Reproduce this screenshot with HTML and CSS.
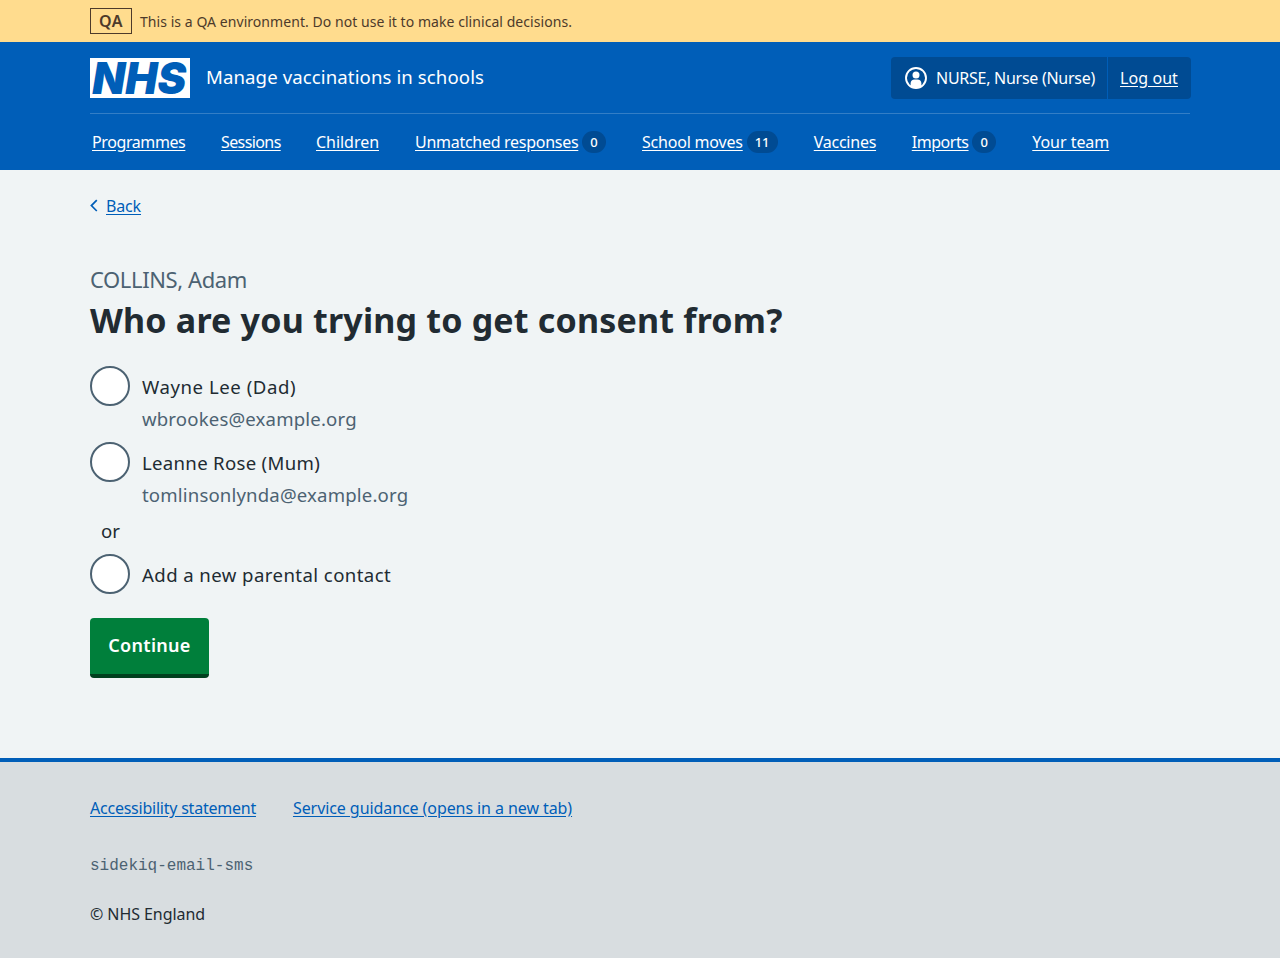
FILE: index.html
```
<!DOCTYPE html>
<html lang="en">
<head>
<meta charset="utf-8">
<title>Who are you trying to get consent from?</title>
<link rel="stylesheet" href="styles.css">
</head>
<body>
<div class="env">
  <div class="container env-row">
    <strong class="env-tag">QA</strong>
    <span class="env-text">This is a QA environment. Do not use it to make clinical decisions.</span>
  </div>
</div>
<header class="header">
  <div class="container">
    <div class="header-top">
      <svg class="logo" viewBox="0 0 100 40" role="img" aria-label="NHS">
        <rect width="100" height="40" fill="#fff"/>
        <text class="logo-text" x="2.2" y="36.2" textLength="94" lengthAdjust="spacingAndGlyphs">NHS</text>
      </svg>
      <span class="service">Manage vaccinations in schools</span>
      <div class="account">
        <span class="account-item account-user">
          <svg class="user-icon" viewBox="0 0 24 24" aria-hidden="true">
            <circle cx="12" cy="12" r="10" fill="none" stroke="#fff" stroke-width="1.9"/>
            <circle cx="12" cy="9" r="3.5" fill="#fff"/>
            <path d="M6.6 20.4v-3c0-2.6 1.7-4 4-4h2.8c2.3 0 4 1.4 4 4v3a10 10 0 0 1-10.8 0z" fill="#fff"/>
          </svg>
          <span class="user-name">NURSE, Nurse (Nurse)</span>
        </span>
        <span class="account-item account-out"><a class="logout" href="#">Log out</a></span>
      </div>
    </div>
    <nav class="nav">
      <a class="nav-item" href="#"><span class="link l-programmes">Programmes</span></a>
      <a class="nav-item" href="#"><span class="link l-sessions">Sessions</span></a>
      <a class="nav-item" href="#"><span class="link l-children">Children</span></a>
      <a class="nav-item" href="#"><span class="link l-responses">Unmatched responses</span><span class="count">0</span></a>
      <a class="nav-item" href="#"><span class="link l-moves">School moves</span><span class="count">11</span></a>
      <a class="nav-item" href="#"><span class="link l-vaccines">Vaccines</span></a>
      <a class="nav-item" href="#"><span class="link l-imports">Imports</span><span class="count">0</span></a>
      <a class="nav-item" href="#"><span class="link l-team">Your team</span></a>
    </nav>
  </div>
</header>
<div class="container page">
  <a class="back" href="#">
    <svg class="back-icon" viewBox="0 0 8 14" aria-hidden="true"><path d="M6.8 1.2 1.4 6.6l5.4 5.4" fill="none" stroke="#005eb8" stroke-width="1.7"/></svg>
    <span class="back-text">Back</span>
  </a>
  <main class="main">
    <h1 class="title"><span class="caption">COLLINS, Adam</span><span class="question">Who are you trying to get consent from?</span></h1>
    <div class="radios">
      <div class="radio"><span class="dot"></span><div class="label"><span class="name n-wayne">Wayne Lee (Dad)</span><span class="hint">wbrookes@example.org</span></div></div>
      <div class="radio"><span class="dot"></span><div class="label"><span class="name">Leanne Rose (Mum)</span><span class="hint">tomlinsonlynda@example.org</span></div></div>
      <div class="divider">or</div>
      <div class="radio"><span class="dot"></span><div class="label"><span class="name n-add">Add a new parental contact</span></div></div>
    </div>
    <button class="button" type="button">Continue</button>
  </main>
</div>
<footer class="footer">
  <div class="container">
    <div class="footer-links">
      <a class="foot-link f-access" href="#">Accessibility statement</a>
      <a class="foot-link f-guide" href="#">Service guidance (opens in a new tab)</a>
    </div>
    <p class="branch">sidekiq-email-sms</p>
    <p class="copyright">© NHS England</p>
  </div>
</footer>
</body>
</html>
```

FILE: styles.css
```
* { box-sizing: border-box; }
body {
  margin: 0;
  min-height: 958px;
  display: flex;
  flex-direction: column;
  background: #f0f4f5;
  color: #212b32;
  font: 400 16px/24px "Noto Sans", "Open Sans", sans-serif;
  white-space: nowrap;
}
.container { width: 1100px; margin: 0 auto; }

/* Environment banner */
.env { height: 42px; background: #ffdc8e; color: #4d3a2a; }
.env-row { display: flex; align-items: center; gap: 8px; height: 42px; }
.env-tag { width: 42px; height: 26px; border: 1px solid #4d3a2a; text-align: center; font-weight: 600; letter-spacing: .5px; }
.env-text { font-size: 14px; letter-spacing: .055px; padding-top: 1px; }

/* Header */
.header { height: 128px; background: #005eb8; color: #fff; }
.header-top { display: flex; align-items: center; height: 72px; border-bottom: 1px solid #337ec6; }
.logo { width: 100px; height: 40px; margin-right: 16px; }
.logo-text { font: italic 900 44.5px Inter, sans-serif; fill: #005eb8; }
.service { font-size: 18.6px; letter-spacing: .1px; padding-bottom: 2px; }
.account { display: flex; margin: 0 -1px 0 auto; height: 42px; border-radius: 4px; background: #004b93; }
.account-item { display: flex; align-items: center; padding: 0 12px; }
.account-user { width: 217px; border-right: 1px solid #005eb8; gap: 8px; padding-left: 13px; }
.account-out { width: 83px; }
.user-icon { width: 24px; height: 24px; }
.user-name { letter-spacing: -.27px; }
.logout { color: #fff; letter-spacing: .08px; text-decoration: underline; text-underline-offset: 2px; }
.nav { display: flex; align-items: center; gap: 36px; height: 56px; padding-left: 2px; }
.nav-item { display: flex; align-items: center; gap: 4px; color: #fff; text-decoration: none; }
.link { text-decoration: underline; text-underline-offset: 2px; }
.l-programmes { width: 93px; letter-spacing: -.4px; }
.l-sessions { width: 59px; letter-spacing: -.6px; }
.l-children { width: 63px; letter-spacing: -.04px; }
.l-responses { width: 163px; letter-spacing: -.28px; }
.l-moves { width: 100.5px; letter-spacing: -.2px; }
.l-vaccines { width: 62px; letter-spacing: -.25px; }
.l-imports { width: 56.5px; letter-spacing: -.45px; }
.l-team { letter-spacing: -.04px; }
.count { min-width: 24px; height: 22px; padding: 0 8.2px; border-radius: 11px; background: #004b93; text-align: center; font-size: 13px; font-weight: 500; line-height: 23px; }

/* Page */
.page { flex: 1; padding-top: 24px; }
.back { display: flex; align-items: center; gap: 8px; color: #005eb8; text-decoration: none; }
.back-icon { width: 8px; height: 14px; }
.back-text { text-decoration: underline; text-underline-offset: 2px; letter-spacing: -.15px; }
.main { padding-top: 45px; }
.title { margin: 0; font-weight: 400; }
.caption { display: block; font-size: 22px; line-height: 32px; color: #4c6272; letter-spacing: -.39px; }
.question { display: block; padding-top: 1px; font-size: 34px; line-height: 48px; font-weight: 700; letter-spacing: .19px; }
.radios { padding-top: 22px; font-size: 18.6px; line-height: 28px; }
.radio { display: flex; gap: 12px; margin-bottom: 8px; }
.dot { width: 40px; height: 40px; border: 2px solid #4c6272; border-radius: 50%; background: #fff; }
.label { padding: 7px 0 1px; }
.name, .hint { display: block; }
.name { letter-spacing: .3px; }
.n-wayne { letter-spacing: .55px; }
.n-add { letter-spacing: .42px; }
.hint { padding-top: 4px; color: #4c6272; letter-spacing: .16px; }
.divider { width: 41px; height: 28px; line-height: 26px; margin-bottom: 8px; text-align: center; }
.button { display: block; width: 119px; height: 60px; margin-top: 24px; padding: 0 0 2px; border: 0; border-bottom: 4px solid #00401e; border-radius: 4px; background: #007f3b; color: #fff; font: 600 18px/28px "Noto Sans", sans-serif; letter-spacing: .3px; }

/* Footer */
.footer { height: 200px; border-top: 4px solid #005eb8; background: #d8dde0; padding-top: 34px; }
.footer-links { display: flex; gap: 37px; }
.foot-link { color: #005eb8; text-decoration: underline; text-underline-offset: 2px; }
.f-access { letter-spacing: -.23px; }
.f-guide { letter-spacing: -.08px; }
.branch { margin: 34px 0 0; color: #4c6272; font-family: "Liberation Mono", monospace; }
.copyright { margin: 24px 0 0; letter-spacing: -.07px; }
```
